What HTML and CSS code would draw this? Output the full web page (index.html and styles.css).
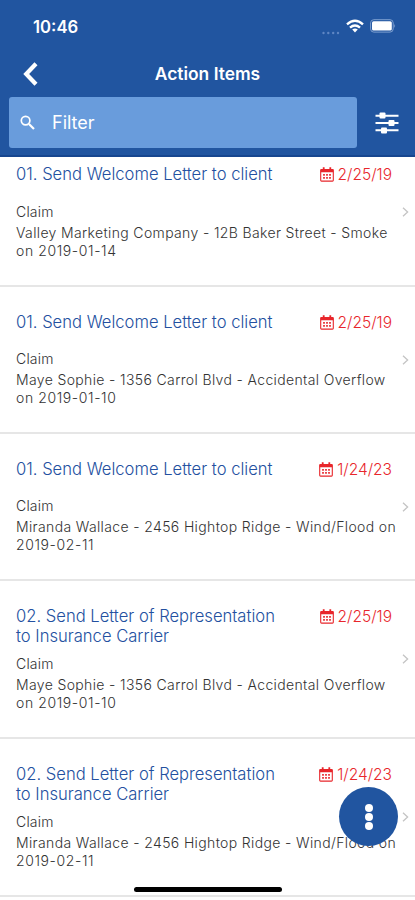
FILE: index.html
```html
<!DOCTYPE html>
<html lang="en">
<head>
<meta charset="utf-8">
<title>Action Items</title>
<link rel="stylesheet" href="styles.css">
</head>
<body>
<svg class="defs" width="0" height="0" aria-hidden="true">
  <symbol id="calendar" viewBox="0 0 14 15">
    <path d="M1.5 2.5h11q.8 0 .8.8v10q0 .8-.8.8h-11q-.8 0-.8-.8v-10q0-.8.8-.8z" fill="none" stroke="currentColor" stroke-width="1.1"/>
    <path d="M.7 2.6h12.6v2.6H.7zM2.8.2h1.8v3H2.8zM9.4.2h1.8v3H9.4z" fill="currentColor"/>
    <path d="M3 7h2v1.8H3zM6 7h2v1.8H6zM9 7h2v1.8H9zM3 10h2v1.8H3zM6 10h2v1.8H6zM9 10h2v1.8H9z" fill="currentColor" opacity=".85"/>
  </symbol>
  <symbol id="chevron" viewBox="0 0 7 10">
    <path d="M1 .8 5.6 5 1 9.2" fill="none" stroke="currentColor" stroke-width="1.3"/>
  </symbol>
</svg>
<div class="screen">
  <header class="header">
    <div class="status">
      <span class="time">10:46</span>
      <div class="indicators">
        <svg class="signal" width="20" height="14" viewBox="0 0 20 14"><g fill="#5f86c3"><circle cx="2.5" cy="11" r="1.2"/><circle cx="7.3" cy="11" r="1.2"/><circle cx="12.2" cy="11" r="1.2"/><circle cx="17" cy="11" r="1.2"/></g></svg>
        <svg class="wifi" width="18" height="14" viewBox="0 0 18 14"><g fill="none" stroke="#fff" stroke-width="2.4"><path d="M1 5.3q8-7 16 0"/><path d="M4 8.6q5-4.3 10 0"/></g><path d="M6.2 10.6q2.8-2.1 5.6 0L9 13.6z" fill="#fff"/></svg>
        <svg class="battery" width="26" height="14" viewBox="0 0 26 14"><rect x=".6" y=".7" width="22.6" height="12.4" rx="3.2" fill="none" stroke="#7d9fd0"/><rect x="2" y="2.2" width="19.8" height="9.4" rx="1.6" fill="#fff"/><path d="M24.3 4.8q1.5 2.1 0 4.2z" fill="#8eabd7"/></svg>
      </div>
    </div>
    <div class="nav">
      <svg class="back" width="16" height="24" viewBox="0 0 16 24"><path d="M14 1.8 4.2 12 14 22.2" fill="none" stroke="#fff" stroke-width="4.2"/></svg>
      <h1>Action Items</h1>
    </div>
    <div class="tools">
      <div class="search">
        <svg width="15" height="15" viewBox="0 0 15 15" fill="none" stroke="#fff"><circle cx="5.6" cy="5.6" r="4.3" stroke-width="1.7"/><path d="m9 9 5 5" stroke-width="2.2"/></svg>
        <span>Filter</span>
      </div>
      <svg class="sliders" width="24" height="24" viewBox="0 0 24 24" fill="#fff"><path d="M.5 3.7h23v2H.5zM.5 11h23v2H.5zM.5 18.3h23v2H.5z"/><rect x="4.5" y="1.6" width="6" height="6" rx="1"/><rect x="13.5" y="9" width="6" height="6" rx="1"/><rect x="6" y="16.4" width="6" height="6" rx="1"/></svg>
    </div>
  </header>
  <main class="list">
    <article class="item item-first">
      <div class="top"><h2>01. Send Welcome Letter to client</h2><time><svg><use href="#calendar"/></svg><span>2/25/19</span></time></div>
      <p class="kind">Claim</p>
      <p class="desc">Valley Marketing Company - 12B Baker Street - Smoke</p>
      <p class="desc date">on 2019-01-14</p>
      <svg class="go"><use href="#chevron"/></svg>
    </article>
    <article class="item">
      <div class="top"><h2>01. Send Welcome Letter to client</h2><time><svg><use href="#calendar"/></svg><span>2/25/19</span></time></div>
      <p class="kind">Claim</p>
      <p class="desc">Maye Sophie - 1356 Carrol Blvd - Accidental Overflow</p>
      <p class="desc date">on 2019-01-10</p>
      <svg class="go"><use href="#chevron"/></svg>
    </article>
    <article class="item">
      <div class="top"><h2>01. Send Welcome Letter to client</h2><time><svg><use href="#calendar"/></svg><span>1/24/23</span></time></div>
      <p class="kind">Claim</p>
      <p class="desc">Miranda Wallace - 2456 Hightop Ridge - Wind/Flood on</p>
      <p class="desc date">2019-02-11</p>
      <svg class="go"><use href="#chevron"/></svg>
    </article>
    <article class="item item-tall">
      <div class="top"><h2>02. Send Letter of Representation<br>to Insurance Carrier</h2><time><svg><use href="#calendar"/></svg><span>2/25/19</span></time></div>
      <p class="kind">Claim</p>
      <p class="desc">Maye Sophie - 1356 Carrol Blvd - Accidental Overflow</p>
      <p class="desc date">on 2019-01-10</p>
      <svg class="go"><use href="#chevron"/></svg>
    </article>
    <article class="item item-tall">
      <div class="top"><h2>02. Send Letter of Representation<br>to Insurance Carrier</h2><time><svg><use href="#calendar"/></svg><span>1/24/23</span></time></div>
      <p class="kind">Claim</p>
      <p class="desc">Miranda Wallace - 2456 Hightop Ridge - Wind/Flood on</p>
      <p class="desc date">2019-02-11</p>
      <svg class="go"><use href="#chevron"/></svg>
    </article>
  </main>
  <div class="fab"><svg width="12" height="28" viewBox="0 0 12 28" fill="#fff"><circle cx="6" cy="5" r="4"/><circle cx="6" cy="14" r="4"/><circle cx="6" cy="23" r="4"/></svg></div>
  <div class="home"></div>
</div>
</body>
</html>
```
FILE: styles.css
```css
* { box-sizing: border-box; }
body { margin: 0; font-family: Inter, "Liberation Sans", sans-serif; background: #fff; }
h1, h2, p { margin: 0; }
.defs { position: absolute; }
.screen { position: relative; width: 415px; height: 900px; overflow: hidden; }
.header { height: 157px; background: #2155a0; border-bottom: 2px solid #17468f; color: #fff; }
.status { height: 52px; padding: 2px 19px 0 33px; display: flex; align-items: center; justify-content: space-between; }
.time { font-size: 16.7px; font-weight: 600; }
.indicators { display: flex; align-items: center; gap: 6px; margin-top: -2px; }
.signal { margin: 6px -1px 0 0; }
.nav { height: 45px; padding-bottom: 1px; display: grid; grid-template-columns: 60px 1fr 60px; align-items: center; }
.back { margin-left: 22px; }
h1 { font-size: 17.4px; line-height: 24px; font-weight: 600; text-align: center; white-space: nowrap; }
.tools { padding: 0 16px 0 9px; display: flex; align-items: center; justify-content: space-between; }
.search { width: 348px; height: 51px; padding-left: 11px; border-radius: 3px; background: #699cdc; display: flex; align-items: center; gap: 17px; font-size: 18px; }
.item { height: 147px; padding: 25px 23px 0 16px; border-bottom: 2px solid #e6e6e6; position: relative; }
.item-first { height: 130px; padding-top: 7px; }
.item-tall { height: 158px; }
.top { display: flex; justify-content: space-between; align-items: flex-start; min-height: 36px; }
.item-first .top { min-height: 37px; }
.item-tall .top { min-height: 47px; }
h2 { font-size: 16.6px; line-height: 20px; font-weight: 300; color: #2350a0; white-space: nowrap; }
time { display: flex; align-items: center; gap: 4px; height: 20px; font-size: 15.5px; font-weight: 300; color: #e8262b; }
time svg { width: 14px; height: 15px; }
.kind, .desc { font-size: 14px; line-height: 18px; font-weight: 300; color: #333; white-space: nowrap; letter-spacing: .36px; }
.kind { line-height: 22px; margin-bottom: 1px; letter-spacing: .2px; }
.desc.date { letter-spacing: .6px; }
.go { position: absolute; right: 6px; top: calc(50% - 5px); width: 7px; height: 10px; color: #c4c4c4; }
.item-first .go { top: 50px; }
.fab { position: absolute; left: 339px; top: 787px; width: 59px; height: 59px; border-radius: 50%; background: #2155a0; display: flex; align-items: center; justify-content: center; }
.home { position: absolute; left: 134px; top: 887px; width: 148px; height: 5px; border-radius: 3px; background: #000; }
```
